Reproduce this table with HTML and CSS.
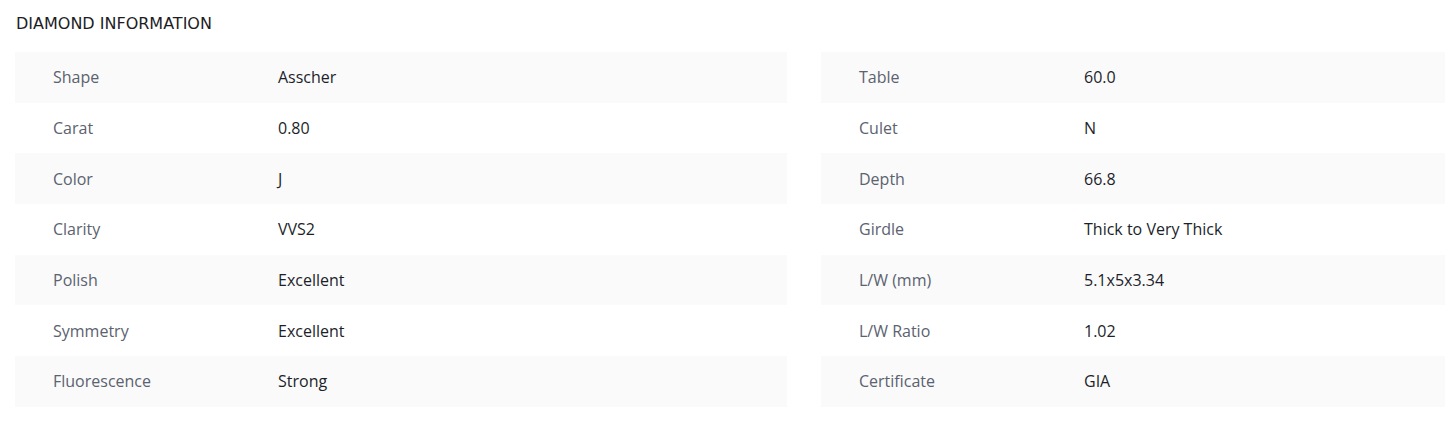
FILE: index.html
```html
<!DOCTYPE html>
<html lang="en">
<head>
<meta charset="utf-8">
<title>Diamond Information</title>
<link rel="stylesheet" href="styles.css">
</head>
<body>
<section class="info">
  <h2 class="info-title">DIAMOND INFORMATION</h2>
  <div class="info-grid">
    <div class="spec-table spec-left">
      <div class="spec-row"><span class="spec-label">Shape</span><span class="spec-value">Asscher</span></div>
      <div class="spec-row"><span class="spec-label">Carat</span><span class="spec-value">0.80</span></div>
      <div class="spec-row"><span class="spec-label">Color</span><span class="spec-value">J</span></div>
      <div class="spec-row"><span class="spec-label">Clarity</span><span class="spec-value">VVS2</span></div>
      <div class="spec-row"><span class="spec-label">Polish</span><span class="spec-value">Excellent</span></div>
      <div class="spec-row"><span class="spec-label">Symmetry</span><span class="spec-value">Excellent</span></div>
      <div class="spec-row"><span class="spec-label">Fluorescence</span><span class="spec-value">Strong</span></div>
    </div>
    <div class="spec-table spec-right">
      <div class="spec-row"><span class="spec-label">Table</span><span class="spec-value">60.0</span></div>
      <div class="spec-row"><span class="spec-label">Culet</span><span class="spec-value">N</span></div>
      <div class="spec-row"><span class="spec-label">Depth</span><span class="spec-value">66.8</span></div>
      <div class="spec-row"><span class="spec-label">Girdle</span><span class="spec-value">Thick to Very Thick</span></div>
      <div class="spec-row"><span class="spec-label">L/W (mm)</span><span class="spec-value">5.1x5x3.34</span></div>
      <div class="spec-row"><span class="spec-label">L/W Ratio</span><span class="spec-value">1.02</span></div>
      <div class="spec-row"><span class="spec-label">Certificate</span><span class="spec-value">GIA</span></div>
    </div>
  </div>
</section>
</body>
</html>
```
FILE: styles.css
```css
* { box-sizing: border-box; }
html, body { margin: 0; padding: 0; background: #ffffff; }
body {
  font-family: "Open Sans", "Noto Sans", "Liberation Sans", sans-serif;
  overflow: hidden;
}
.info {
  padding: 12px 0 0 15px;
}
.info-title {
  margin: 0 0 0 1px;
  font-family: "DejaVu Sans", "Liberation Sans", sans-serif;
  font-weight: 400;
  font-size: 16px;
  line-height: 22px;
  padding-top: 1px;
  color: #1d1d1f;
  letter-spacing: 0;
}
.info-grid {
  display: grid;
  grid-template-columns: 772px 1fr;
  column-gap: 34px;
  margin-top: 17px;
}
.spec-row {
  display: flex;
  align-items: center;
  height: 50.7px;
  font-size: 16px;
}
.spec-row:nth-child(odd) {
  background: #fafafa;
}
.spec-label {
  flex: 0 0 263px;
  padding-left: 38px;
  color: #5b6270;
}
.spec-value {
  color: #1c1f2a;
}
```
